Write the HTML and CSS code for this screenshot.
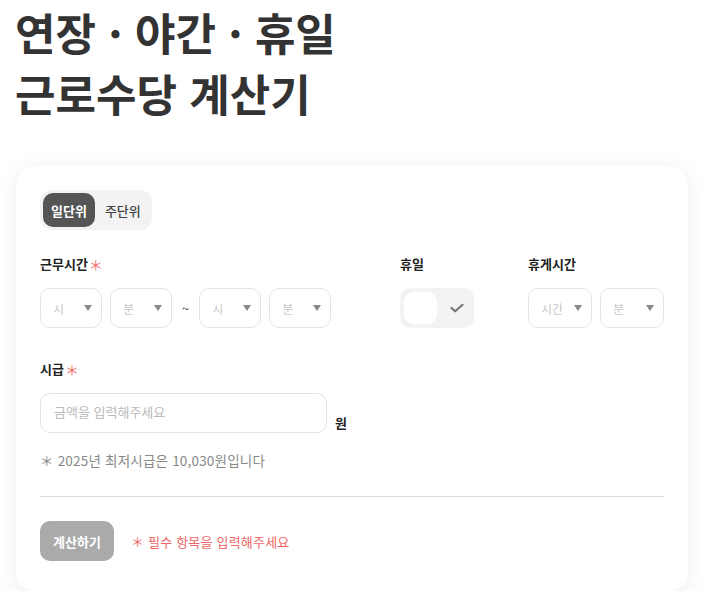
FILE: index.html
```html
<!DOCTYPE html>
<html lang="ko">
<head>
<meta charset="utf-8">
<title>연장 · 야간 · 휴일 근로수당 계산기</title>
<link rel="stylesheet" href="styles.css">
</head>
<body>
<main class="page">
  <h1 class="title">연장 · 야간 · 휴일<br>근로수당 계산기</h1>
  <section class="card">
    <div class="seg">
      <button class="seg-btn active">일단위</button>
      <button class="seg-btn">주단위</button>
    </div>

    <div class="row">
      <div class="field">
        <div class="label">근무시간<span class="req">＊</span></div>
        <div class="controls">
          <div class="select"><span>시</span><i class="arrow"></i></div>
          <div class="select"><span>분</span><i class="arrow"></i></div>
          <span class="tilde">~</span>
          <div class="select"><span>시</span><i class="arrow"></i></div>
          <div class="select"><span>분</span><i class="arrow"></i></div>
        </div>
      </div>
      <div class="field">
        <div class="label">휴일</div>
        <div class="controls">
          <div class="switch">
            <span class="knob"></span>
            <svg class="check" width="14" height="10" viewBox="0 0 14 10"><path d="M1.5 5 L5.2 8.3 L12.5 1.8" fill="none" stroke="#777" stroke-width="2.2" stroke-linecap="round" stroke-linejoin="round"/></svg>
          </div>
        </div>
      </div>
      <div class="field">
        <div class="label">휴게시간</div>
        <div class="controls">
          <div class="select wide"><span>시간</span><i class="arrow"></i></div>
          <div class="select wide"><span>분</span><i class="arrow"></i></div>
        </div>
      </div>
    </div>

    <div class="wage">
      <div class="label">시급<span class="req">＊</span></div>
      <div class="wage-row">
        <div class="input">금액을 입력해주세요</div>
        <span class="unit">원</span>
      </div>
      <p class="note">＊ 2025년 최저시급은 10,030원입니다</p>
    </div>

    <hr class="divider">

    <div class="actions">
      <button class="calc">계산하기</button>
      <span class="error">＊ 필수 항목을 입력해주세요</span>
    </div>
  </section>
</main>
</body>
</html>
```

FILE: styles.css
```css
* { box-sizing: border-box; }
html, body { margin: 0; padding: 0; background: #fff; }
body {
  font-family: "Noto Sans CJK KR", "Noto Sans", sans-serif;
  color: #333;
}
.page {
  padding: 2px 23px 0 16px;
}
.title {
  margin: 0 0 0 -1px;
  font-size: 44px;
  line-height: 61px;
  font-weight: 700;
  color: #333;
  letter-spacing: 0;
}
.card {
  margin-top: 42px;
  background: #fff;
  border-radius: 20px;
  box-shadow: 0 4px 24px rgba(0, 0, 0, 0.07);
  padding: 24px 24px 30px;
}
.seg {
  display: inline-flex;
  background: #f3f3f3;
  border-radius: 12px;
  padding: 3px;
  gap: 2px;
}
.seg-btn {
  border: 0;
  background: transparent;
  font-family: inherit;
  font-size: 13px;
  font-weight: 500;
  color: #444;
  height: 34px;
  padding: 0 8px;
  border-radius: 10px;
}
.seg-btn.active {
  background: #555;
  color: #fff;
  font-weight: 700;
}
.row {
  display: grid;
  grid-template-columns: 360px 128px 1fr;
  margin-top: 26px;
}
.label {
  font-size: 13px;
  font-weight: 700;
  color: #222;
  height: 16px;
  line-height: 16px;
  display: flex;
  align-items: center;
}
.req {
  color: #f07070;
  margin-left: 1px;
  font-size: 14px;
  font-weight: 400;
  line-height: 16px;
}
.controls {
  display: flex;
  align-items: center;
  gap: 8px;
  margin-top: 16px;
}
.select {
  width: 62px;
  height: 40px;
  border: 1px solid #e3e3e3;
  border-radius: 10px;
  display: flex;
  align-items: center;
  justify-content: space-between;
  padding: 0 9px 0 12px;
  font-size: 12px;
  color: #c8c8c8;
}
.select.wide { width: 64px; }
.arrow {
  width: 0;
  height: 0;
  border-left: 4px solid transparent;
  border-right: 4px solid transparent;
  border-top: 6px solid #888;
}
.tilde {
  font-size: 13px;
  color: #444;
  padding: 0 2px;
}
.switch {
  width: 74px;
  height: 40px;
  background: #f3f3f3;
  border-radius: 10px;
  padding: 4px;
  display: flex;
  align-items: center;
}
.knob {
  width: 33px;
  height: 32px;
  background: #fff;
  border-radius: 10px;
}
.check { margin-left: 13px; }
.wage { margin-top: 33px; }
.wage-row {
  display: flex;
  align-items: flex-end;
  gap: 8px;
  margin-top: 16px;
}
.input {
  width: 287px;
  height: 40px;
  border: 1px solid #e3e3e3;
  border-radius: 10px;
  padding: 0 13px;
  font-size: 13px;
  color: #bbb;
  line-height: 36px;
}
.unit {
  font-size: 13px;
  font-weight: 700;
  color: #222;
  line-height: 16px;
  margin-bottom: 2px;
}
.note {
  margin: 17px 0 0;
  font-size: 13.5px;
  color: #888;
  line-height: 20px;
  letter-spacing: 0.2px;
}
.divider {
  border: 0;
  border-top: 1px solid #ddd;
  margin: 26px 0 0;
}
.actions {
  display: flex;
  align-items: center;
  gap: 17px;
  margin-top: 24px;
}
.calc {
  border: 0;
  background: #aaa;
  color: #fff;
  font-family: inherit;
  font-size: 13px;
  font-weight: 700;
  width: 74px;
  height: 40px;
  border-radius: 10px;
}
.error {
  font-size: 13px;
  color: #e66;
  letter-spacing: 0.2px;
}
```
